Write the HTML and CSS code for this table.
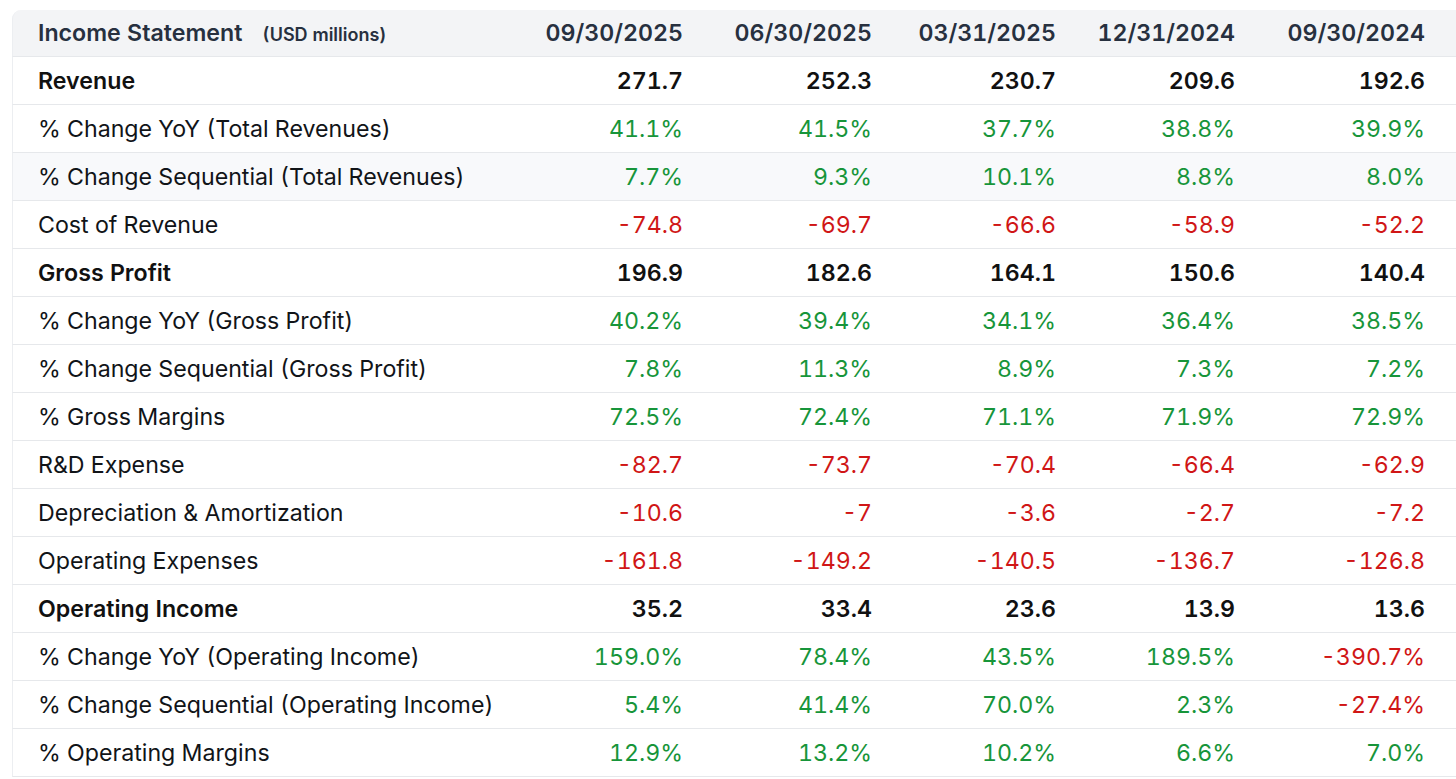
FILE: index.html
```html
<!DOCTYPE html>
<html>
<head>
<meta charset="utf-8">
<link rel="stylesheet" href="styles.css">
</head>
<body>
<table class="fin">
  <colgroup>
    <col class="c-label"><col class="c1"><col class="c2"><col class="c3"><col class="c4"><col class="c5">
  </colgroup>
  <thead>
    <tr>
      <th class="title">Income Statement <span class="unit">(USD millions)</span></th>
      <th>09/30/2025</th><th>06/30/2025</th><th>03/31/2025</th><th>12/31/2024</th><th>09/30/2024</th>
    </tr>
  </thead>
  <tbody>
    <tr class="bold"><td>Revenue</td><td>271.7</td><td>252.3</td><td>230.7</td><td>209.6</td><td>192.6</td></tr>
    <tr><td>% Change YoY (Total Revenues)</td><td class="pos">41.1%</td><td class="pos">41.5%</td><td class="pos">37.7%</td><td class="pos">38.8%</td><td class="pos">39.9%</td></tr>
    <tr class="hl"><td>% Change Sequential (Total Revenues)</td><td class="pos">7.7%</td><td class="pos">9.3%</td><td class="pos">10.1%</td><td class="pos">8.8%</td><td class="pos">8.0%</td></tr>
    <tr><td>Cost of Revenue</td><td class="neg">-74.8</td><td class="neg">-69.7</td><td class="neg">-66.6</td><td class="neg">-58.9</td><td class="neg">-52.2</td></tr>
    <tr class="bold"><td>Gross Profit</td><td>196.9</td><td>182.6</td><td>164.1</td><td>150.6</td><td>140.4</td></tr>
    <tr><td>% Change YoY (Gross Profit)</td><td class="pos">40.2%</td><td class="pos">39.4%</td><td class="pos">34.1%</td><td class="pos">36.4%</td><td class="pos">38.5%</td></tr>
    <tr><td>% Change Sequential (Gross Profit)</td><td class="pos">7.8%</td><td class="pos">11.3%</td><td class="pos">8.9%</td><td class="pos">7.3%</td><td class="pos">7.2%</td></tr>
    <tr><td>% Gross Margins</td><td class="pos">72.5%</td><td class="pos">72.4%</td><td class="pos">71.1%</td><td class="pos">71.9%</td><td class="pos">72.9%</td></tr>
    <tr><td>R&amp;D Expense</td><td class="neg">-82.7</td><td class="neg">-73.7</td><td class="neg">-70.4</td><td class="neg">-66.4</td><td class="neg">-62.9</td></tr>
    <tr><td>Depreciation &amp; Amortization</td><td class="neg">-10.6</td><td class="neg">-7</td><td class="neg">-3.6</td><td class="neg">-2.7</td><td class="neg">-7.2</td></tr>
    <tr><td>Operating Expenses</td><td class="neg">-161.8</td><td class="neg">-149.2</td><td class="neg">-140.5</td><td class="neg">-136.7</td><td class="neg">-126.8</td></tr>
    <tr class="bold"><td>Operating Income</td><td>35.2</td><td>33.4</td><td>23.6</td><td>13.9</td><td>13.6</td></tr>
    <tr><td>% Change YoY (Operating Income)</td><td class="pos">159.0%</td><td class="pos">78.4%</td><td class="pos">43.5%</td><td class="pos">189.5%</td><td class="neg">-390.7%</td></tr>
    <tr><td>% Change Sequential (Operating Income)</td><td class="pos">5.4%</td><td class="pos">41.4%</td><td class="pos">70.0%</td><td class="pos">2.3%</td><td class="neg">-27.4%</td></tr>
    <tr><td>% Operating Margins</td><td class="pos">12.9%</td><td class="pos">13.2%</td><td class="pos">10.2%</td><td class="pos">6.6%</td><td class="pos">7.0%</td></tr>
  </tbody>
</table>
</body>
</html>
```

FILE: styles.css
```css
html, body {
  margin: 0;
  padding: 0;
  background: #ffffff;
}
body {
  padding: 10px 0 0 12px;
  font-family: Inter, "Liberation Sans", sans-serif;
}
.fin {
  width: 1444px;
  table-layout: fixed;
  border-collapse: separate;
  border-spacing: 0;
  font-size: 23.2px;
  color: #111418;
  font-variant-numeric: tabular-nums;
}
.c-label { width: 510px; }
.c1 { width: 189px; }
.c2 { width: 189px; }
.c3 { width: 184px; }
.c4 { width: 179px; }
.c5 { width: 193px; }
.fin th, .fin td {
  height: 47px;
  padding: 0 28px 0 0;
  text-align: right;
  border-bottom: 1px solid #e6e8eb;
  white-space: nowrap;
  box-sizing: border-box;
}
.fin th {
  background: #f3f4f6;
  color: #27303f;
  font-weight: 600;
  height: 47px;
}
.fin th:first-child, .fin td:first-child {
  text-align: left;
  padding-left: 25px;
  border-left: 1px solid #eceef1;
}
.fin th:first-child {
  border-top-left-radius: 9px;
}
.fin th:last-child, .fin td:last-child {
  padding-right: 31px;
}
.title .unit {
  font-size: 18px;
  font-weight: 600;
  margin-left: 14px;
}
.fin td { height: 48px; }
.bold td { font-weight: 600; color: #111; }
.hl td { background: #f8f9fb; }
.pos { color: #17953a; }
.neg { color: #d01616; }
```
